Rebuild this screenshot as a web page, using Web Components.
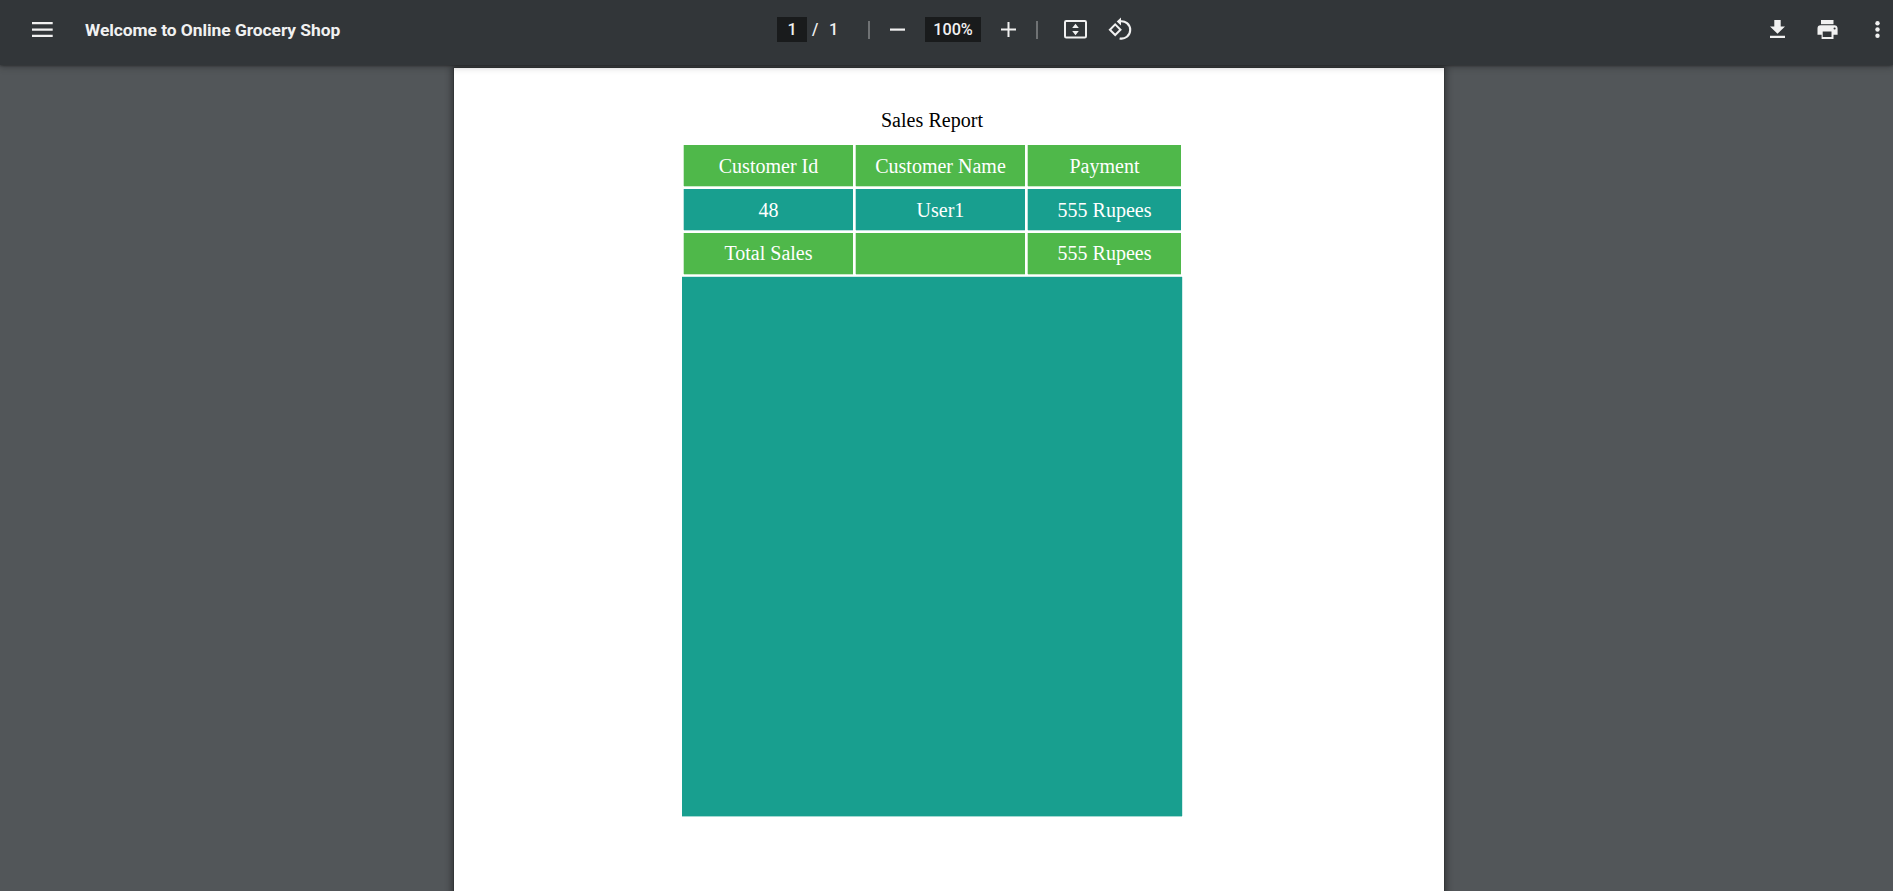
<!DOCTYPE html>
<html lang="en">
<head>
<meta charset="utf-8">
<title>Welcome to Online Grocery Shop</title>
<style>
html,body{margin:0;height:100%;overflow:hidden;background:#525659}
</style>
</head>
<body>
<pdf-viewer></pdf-viewer>
<script>
const define = (name, html) => customElements.define(name, class extends HTMLElement {
  constructor() {
    super();
    this.attachShadow({mode: 'open'}).innerHTML = html;
  }
});

const icons = {
  menu: '<path d="M2 5h20.7v2.300H2zM2 11.400h20.700v2.300H2zM2 17.700h20.700V20H2z"/>',
  minus: '<path d="M5 11.5h15v2.2H5z"/>',
  plus: '<path d="M5 11.5h15v2H5zM11.5 5h2v15h-2z"/>',
  fit: '<path fill="none" stroke="#f1f1f1" stroke-width="2" d="M3.2 4.1h18.6q1.2 0 1.2 1.2v14q0 1.2-1.2 1.2H3.2Q2 20.500 2 19.300v-14q0-1.200 1.200-1.200z"/><path d="M9.200 11h6.600l-3.300-4.200zM9.200 14h6.600l-3.300 4.200z"/>',
  rotate: '<path fill="none" stroke="#f1f1f1" stroke-width="2" d="M7.200 7.400l5.300 5.300-5.300 5.300-5.300-5.300z"/><path fill="none" stroke="#f1f1f1" stroke-width="2.100" d="M11.700 4.400a8.700 8.700 0 1 1-.1 17"/><path d="M13 .5v8L8.700 4.400z"/>',
  download: '<path d="M20 9.400h-4.300V3H9.300v6.400H5l7.500 7.300zM5 18.800v2.100h15v-2.100z"/>',
  print: '<path fill-rule="evenodd" d="M18.600 8.300H5.600a3.100 3.100 0 0 0-3.100 3.100v6.300h4.100V22h11.900v-4.300h4.100v-6.300a3.100 3.100 0 0 0-4-3.100zM16.500 19.900H7.700v-5.300h8.800zM19.600 12.600a1 1 0 1 1 0-2.100 1 1 0 0 1 0 2.100z"/><path d="M18.500 3H6v4.200h12.500z"/>',
  more: '<circle cx="12.500" cy="6.200" r="2.200"/><circle cx="12.500" cy="12.500" r="2.200"/><circle cx="12.500" cy="18.800" r="2.200"/>'
};
customElements.define('pdf-icon', class extends HTMLElement {
  constructor() {
    super();
    this.attachShadow({mode: 'open'}).innerHTML =
      `<style>:host{display:block;width:25px;height:25px;flex:none}svg{display:block;overflow:visible}</style>
       <svg width="25" height="25" viewBox="0 0 25 25" fill="#f1f1f1">${icons[this.getAttribute('name')]}</svg>`;
  }
});

define('tool-field', `<style>
  :host{display:flex;align-items:center;justify-content:center;height:25px;background:#191b1c;flex:none}
</style><slot></slot>`);

define('tool-divider', `<style>
  :host{display:block;width:2px;height:18px;background:#6f7274;flex:none}
</style>`);

define('pdf-toolbar', `<style>
  :host{display:grid;grid-template-columns:777px 1fr auto;align-items:center;height:65px;padding-bottom:6px;box-sizing:border-box;
    background:#323639;color:#f1f1f1;font:500 16.25px Roboto,sans-serif;position:relative;z-index:2;
    box-shadow:0 -2px 8px rgba(0,0,0,.09),0 4px 8px rgba(0,0,0,.06),0 1px 2px rgba(0,0,0,.3),0 2px 6px rgba(0,0,0,.15)}
  .group{display:flex;align-items:center}
  .start{padding-left:30px}
  h1{margin:0 0 0 30px;padding-top:2px;font-size:17.4px;font-weight:700;line-height:25px;white-space:nowrap;letter-spacing:-.05px}
  .page{width:30px}.zoom{width:56px}
  .slash{width:7px;margin-left:5px}.total{width:11px;margin-left:10px}
</style>
<div class="group start"><pdf-icon name="menu"></pdf-icon><h1><slot></slot></h1></div>
<div class="group">
  <tool-field class="page">1</tool-field><span class="slash">/</span><span class="total">1</span>
  <tool-divider style="margin-left:28px"></tool-divider>
  <pdf-icon name="minus" style="margin-left:15px"></pdf-icon>
  <tool-field class="zoom" style="margin-left:15px">100%</tool-field>
  <pdf-icon name="plus" style="margin-left:15px"></pdf-icon>
  <tool-divider style="margin-left:15px"></tool-divider>
  <pdf-icon name="fit" style="margin-left:25px"></pdf-icon>
  <pdf-icon name="rotate" style="margin-left:20px"></pdf-icon>
</div>
<div class="group" style="gap:25px;padding-right:3px">
  <pdf-icon name="download"></pdf-icon><pdf-icon name="print"></pdf-icon><pdf-icon name="more"></pdf-icon>
</div>`);

define('report-cell', `<style>
  :host{display:flex;align-items:center;justify-content:center;box-sizing:border-box;padding-top:2px;
    background:var(--cell,#4fb84a);line-height:23px;
    box-shadow:-1px 0 color-mix(in srgb,var(--cell,#4fb84a) 30%,white),0 1px color-mix(in srgb,var(--cell,#4fb84a) 30%,white)}
</style><slot></slot>`);

define('sales-report', `<style>
  :host{display:block;color:#fff;font:20px "Liberation Serif",serif}
  h2{margin:0;font:inherit;color:#000;text-align:center;line-height:24px;letter-spacing:.04px}
  .table{display:grid;grid-template-columns:169px 169px 153px;grid-template-rows:repeat(3,41px);gap:3px;
    margin:13px 1px 0 2px}
  .user{--cell:#189f8f}
  .last{padding-top:0}
  .fill{height:539px;margin-top:3px;background:#189f8f;box-shadow:0 1px #a3d9d2,1px 0 #d1ecE9,0 -1px #d1ece9}
</style>
<h2>Sales Report</h2>
<div class="table">
  <report-cell>Customer Id</report-cell><report-cell>Customer Name</report-cell><report-cell>Payment</report-cell>
  <report-cell class="user">48</report-cell><report-cell class="user">User1</report-cell><report-cell class="user">555 Rupees</report-cell>
  <report-cell class="last">Total Sales</report-cell><report-cell class="last"></report-cell><report-cell class="last">555 Rupees</report-cell>
</div>
<div class="fill"></div>`);

define('pdf-page', `<style>
  :host{display:block;box-sizing:border-box;width:990px;height:1400px;margin:3px 0 0 454px;padding:40px 262px 0 228px;background:#fff;
    box-shadow:0 0 0 1px rgba(0,0,0,.12),0 0 7px 2px rgba(0,0,0,.42)}
</style><slot></slot>`);

define('pdf-viewer', `<style>
  :host{display:block;height:100vh;overflow:hidden;background:#525659}
</style>
<pdf-toolbar>Welcome to Online Grocery Shop</pdf-toolbar>
<pdf-page><sales-report></sales-report></pdf-page>`);
</script>
</body>
</html>
